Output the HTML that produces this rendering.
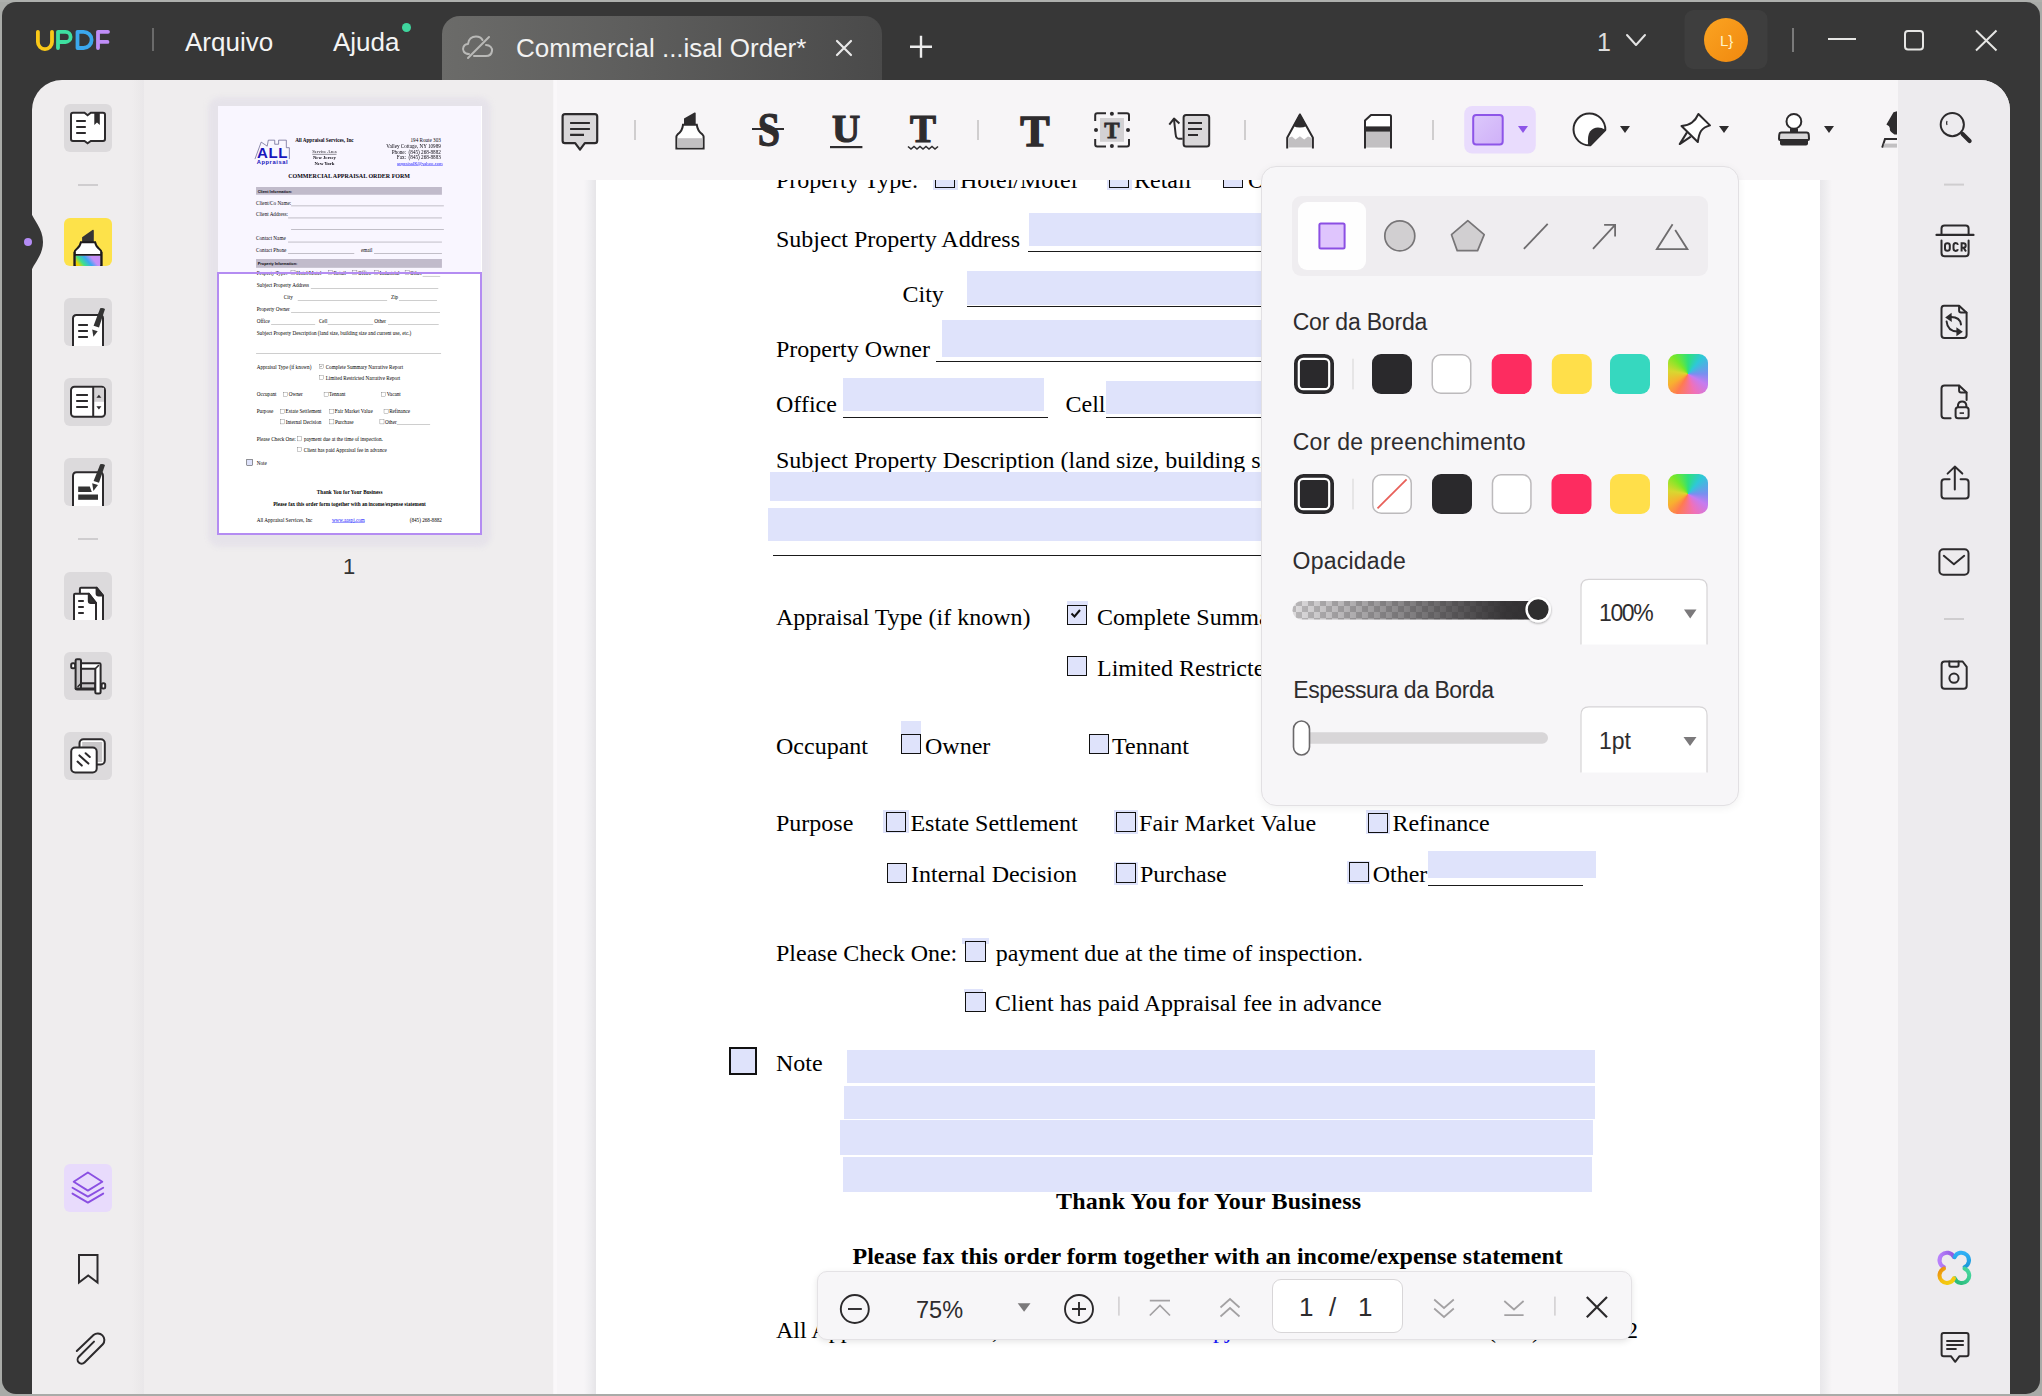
<!DOCTYPE html>
<html><head><meta charset="utf-8">
<style>
*{box-sizing:border-box;margin:0;padding:0}
html,body{width:2042px;height:1396px;overflow:hidden;background:#a9aba8;font-family:"Liberation Sans",sans-serif}
.abs{position:absolute}
#frame{position:absolute;left:2px;top:2px;width:2038px;height:1392px;background:#373737;border-radius:14px;overflow:hidden}
.t{position:absolute;white-space:pre;line-height:1}
.serif{font-family:"Liberation Serif",serif}
svg{position:absolute;overflow:visible}
.page{position:absolute;width:1224px;height:1992px;background:#fff;font-family:"Liberation Serif",serif;color:#000}
.pt{position:absolute;white-space:pre;line-height:1}
.pr{position:absolute}
.cb{background:#dfe3fb}
.thumb .fld{display:none}
.thumb .cb{background:#fff}
.thumbonly{display:none}
.thumb .thumbonly{display:block}
</style></head><body>
<div id="frame"></div>
<!-- desktop bits -->
<div class="abs" style="left:0;top:0;width:2042px;height:2px;background:#aeb0ad"></div>

<!-- ============ TITLE BAR ============ -->
<div id="titlebar">
  <div class="abs" style="left:152px;top:28px;width:2px;height:23px;background:#6a6a6a"></div>
  <div class="t" style="left:185px;top:29px;font-size:26px;color:#f4f4f4">Arquivo</div>
  <div class="t" style="left:333px;top:29px;font-size:26px;color:#f4f4f4">Ajuda</div>
  <div class="abs" style="left:402px;top:23px;width:9px;height:9px;border-radius:50%;background:#3fd69e"></div>
  <!-- tab -->
  <div class="abs" style="left:442px;top:16px;width:440px;height:64px;border-radius:18px 18px 0 0;background:linear-gradient(90deg,#6b6b69 0%,#5d5d5c 45%,#4a4a4a 100%)"></div>
  <div class="t" style="left:516px;top:35px;font-size:26px;color:#f2f2f2">Commercial ...isal Order*</div>

  <svg style="left:0;top:0" width="2042" height="80">
    <g fill="none" stroke-linecap="round" stroke-linejoin="round" stroke-width="3.8">
      <path d="M37.9,31.8 V42 A7.05,7.05 0 0 0 52,42 V31.8" stroke="#f9c818"/>
      <path d="M58,48 V31.8 H65.5 A5.1,5.1 0 0 1 65.5,42 H58" stroke="#3ee0a0"/>
      <path d="M77.5,31.8 V48 H83.5 A8.1,8.1 0 0 0 83.5,31.8 Z" stroke="#3ba8ee"/>
      <path d="M98,48 V31.8 H108 M98,41.9 H107.5" stroke="#c08ef8"/>
    </g>
    <!-- tab cloud-off icon -->
    <g fill="none" stroke="#b9b9b7" stroke-width="2" stroke-linecap="round" stroke-linejoin="round">
      <path d="M469,54 C464,54 462,50 463.5,47 C464.5,44.5 467,44 468,44 C468.5,39 472,36.5 476,36.5 C479,36.5 481.5,38 482.5,40"/>
      <path d="M486,45 C490,45 492.5,48 492,51 C491.5,54.5 489,56 486,56 H474"/>
      <path d="M489,37 L468,58"/>
    </g>
    <g stroke="#e8e8e8" stroke-width="2.2" stroke-linecap="round">
      <path d="M837,41 L851,55 M851,41 L837,55"/>
    </g>
    <g stroke="#ececec" stroke-width="2.4">
      <path d="M910,46.8 H932 M921,35.8 V57.8"/>
    </g>
    <!-- page count -->
    <g fill="none" stroke="#e4e4e4" stroke-width="2" stroke-linecap="round" stroke-linejoin="round">
      <path d="M1627,35 L1636,45 L1645,35"/>
    </g>
    <rect x="1684.5" y="10" width="83" height="59" rx="9" fill="#3e3e3e"/>
    <defs><linearGradient id="avg" x1="0" y1="0" x2="1" y2="1"><stop offset="0" stop-color="#fba422"/><stop offset="1" stop-color="#f0880e"/></linearGradient></defs><circle cx="1726" cy="40" r="22" fill="url(#avg)"/>
    <rect x="1792" y="28" width="2" height="24" fill="#7a7a7a"/>
    <g stroke="#e6e6e4" stroke-width="2" fill="none">
      <path d="M1828,39 H1856"/>
      <rect x="1905" y="31" width="18" height="18.6" rx="3"/>
      <path d="M1976,30.5 L1996.5,50.5 M1996.5,30.5 L1976,50.5"/>
    </g>
  </svg>
  <div class="t" style="left:1597px;top:30px;font-size:25px;color:#dedede">1</div>
  <div class="t" style="left:1720px;top:33px;font-size:15px;color:#fff3c8">L}</div>
</div>

<!-- ============ CONTENT PANEL ============ -->
<div class="abs" style="left:32px;top:80px;width:1978px;height:1314px;background:#efedee;border-radius:30px 30px 0 0;overflow:hidden">
  <!-- toolbar & doc area -->
  <div class="abs" style="left:521px;top:0;width:1345px;height:1314px;background:#f7f5f7"></div>
  <div class="abs" style="left:522px;top:0;width:3px;height:1314px;background:#faf8fa"></div>
  <!-- right sidebar -->
  <div class="abs" style="left:1866px;top:0;width:112px;height:1314px;background:#edebee"></div>
  <!-- sidebar divider -->
  <div class="abs" style="left:100px;top:0;width:12px;height:1314px;background:linear-gradient(90deg,rgba(233,231,233,0) 0%,#eceaeb 50%,#e9e7e9 100%)"></div>
</div>


<!-- ============ LEFT SIDEBAR ============ -->
<svg style="left:0;top:0" width="150" height="1396">
  <path d="M31,212 C33,220 43,228 43,242 C43,256 33,264 31,272 Z" fill="#373737"/>
  <circle cx="28" cy="242" r="4" fill="#b48cf5"/>
  <rect x="78" y="184" width="20" height="2" fill="#cfcdcf"/>
  <rect x="78" y="538" width="20" height="2" fill="#cfcdcf"/>
</svg>
<!-- book -->
<svg style="left:64px;top:104px" width="48" height="48" viewBox="0 0 48 48">
  <rect width="48" height="48" rx="6" fill="#dcdadc"/>
  <path d="M9,8.8 H20.5 L23.6,11.2 L26.8,8.8 H39 Q41,8.8 41,10.8 V35 Q41,37 39,37 H26.8 L23.6,39.2 L20.5,37 H9 Q7,37 7,35 V10.8 Q7,8.8 9,8.8 Z" fill="#fff" stroke="#2c2a2c" stroke-width="2"/>
  <path d="M12.2,17 H21.8 M12.2,23 H21.8 M12.2,28.9 H21.8" stroke="#2c2a2c" stroke-width="2"/>
  <path d="M30.3,9 H35.8 V20.9 L33,18.6 L30.3,20.9 Z" fill="#2c2a2c"/>
</svg>
<!-- highlighter -->
<svg style="left:64px;top:218px" width="48" height="48" viewBox="0 0 48 48">
  <defs><linearGradient id="rb" x1="0" y1="1" x2="1" y2="0.6">
    <stop offset="0" stop-color="#ffb000"/><stop offset="0.18" stop-color="#e8d400"/><stop offset="0.38" stop-color="#3ee08c"/><stop offset="0.62" stop-color="#38a8f0"/><stop offset="0.85" stop-color="#c58ef8"/></linearGradient>
  <clipPath id="c48"><rect width="48" height="48" rx="6"/></clipPath></defs>
  <rect width="48" height="48" rx="6" fill="#fde24a"/>
  <g clip-path="url(#c48)">
  <path d="M18.1,19.2 L28.4,12 Q29.8,11.4 29.8,13 V24.2 H18.1 Z" fill="#353535"/>
  <path d="M16.9,24.2 H31.1 Q31.8,28.5 35.3,31 Q37.4,32.8 37.4,34 V48 H10.6 V34 Q10.6,32.8 12.7,31 Q16.2,28.5 16.9,24.2 Z" fill="#fff" stroke="#1d1b1d" stroke-width="2"/>
  <rect x="11.6" y="37.6" width="24.8" height="12" fill="url(#rb)"/>
  <path d="M11,36.8 H37" stroke="#1d1b1d" stroke-width="1.8"/>
  <path d="M10.6,34 V48 M37.4,34 V48" stroke="#1d1b1d" stroke-width="2"/>
  </g>
</svg>
<!-- form -->
<svg style="left:64px;top:298px" width="48" height="48" viewBox="0 0 48 48">
  <defs><clipPath id="c48b"><rect width="48" height="48" rx="6"/></clipPath></defs>
  <rect width="48" height="48" rx="6" fill="#dcdadc"/>
  <g clip-path="url(#c48b)">
  <path d="M9,50 V20.5 Q9,17 12.5,17 H35.5 Q39,17 39,20.5 V50" fill="#fff" stroke="#2c2a2c" stroke-width="2"/>
  <path d="M14.2,27.1 H23.9 M14.2,33 H23.9 M14.2,38.9 H23.9" stroke="#2c2a2c" stroke-width="2"/>
  <path d="M36.2,10.2 Q38.6,9.3 41,10.9 L35,29.6 L29.6,27.8 Z" fill="#333"/>
  <path d="M28.2,31.4 L33.7,33.3 L29.4,38.8 Z" fill="#333"/>
  </g>
</svg>
<!-- toc -->
<svg style="left:64px;top:378px" width="48" height="48" viewBox="0 0 48 48">
  <rect width="48" height="48" rx="6" fill="#dcdadc"/>
  <rect x="7" y="8.8" width="34" height="30" rx="3.5" fill="#fff" stroke="#2c2a2c" stroke-width="2"/>
  <rect x="30.2" y="9.8" width="9.8" height="14" fill="#d5d3d5"/>
  <path d="M29.2,9 V38.8" stroke="#2c2a2c" stroke-width="2"/>
  <path d="M12.2,17 H23.9 M12.2,23 H23.9 M12.2,28.9 H23.9" stroke="#2c2a2c" stroke-width="2"/>
  <path d="M32.4,19.8 L34.9,16.8 L37.4,19.8 Z M32.4,28.2 L34.9,31.4 L37.4,28.2 Z" fill="#2c2a2c"/>
</svg>
<!-- form fill -->
<svg style="left:64px;top:458px" width="48" height="48" viewBox="0 0 48 48">
  <defs><clipPath id="c48c"><rect width="48" height="48" rx="6"/></clipPath></defs>
  <rect width="48" height="48" rx="6" fill="#dcdadc"/>
  <g clip-path="url(#c48c)">
  <path d="M9,50 V18 Q9,14.3 12.5,14.3 H35.5 Q39,14.3 39,18 V50" fill="#fff" stroke="#2c2a2c" stroke-width="2"/>
  <path d="M14.2,28.5 H25.8 L27.8,34 H14.2 Z" fill="#333"/>
  <rect x="14.2" y="36.5" width="19.8" height="5.3" fill="#333"/>
  <path d="M36.2,6.2 Q38.6,5.3 41,6.9 L35,24.8 L29.6,23 Z" fill="#333"/>
  <path d="M28.2,25.3 L34,27.1 L29.4,33.1 Z" fill="#333"/>
  </g>
</svg>
<!-- pages -->
<svg style="left:64px;top:572px" width="48" height="48" viewBox="0 0 48 48">
  <defs><clipPath id="c48d"><rect width="48" height="48" rx="6"/></clipPath></defs>
  <rect width="48" height="48" rx="6" fill="#dcdadc"/>
  <g clip-path="url(#c48d)">
  <path d="M15.9,50 V17 Q15.9,15.8 17,15.8 H32.6 L39,23.6 V50" fill="#fff" stroke="#2c2a2c" stroke-width="2"/>
  <path d="M32.6,15.8 V21.6 Q32.6,23.6 34.6,23.6 H39 Z" fill="#333" stroke="#2c2a2c" stroke-width="2" stroke-linejoin="round"/>
  <path d="M10,50 V23 Q10,21.8 11.2,21.8 H24.8 L32,31 V50" fill="#fff" stroke="#2c2a2c" stroke-width="2"/>
  <path d="M24.8,21.8 V29 Q24.8,31 26.8,31 H32 Z" fill="#333" stroke="#2c2a2c" stroke-width="2" stroke-linejoin="round"/>
  <path d="M14.2,28.9 H19.8 M14.2,35 H19.8 M14.2,40.9 H19.8" stroke="#2c2a2c" stroke-width="2"/>
  </g>
</svg>
<!-- crop -->
<svg style="left:64px;top:652px" width="48" height="48" viewBox="0 0 48 48">
  <rect width="48" height="48" rx="6" fill="#dcdadc"/>
  <g stroke="#2c2a2c" stroke-width="2" stroke-linejoin="round">
  <rect x="7.2" y="11.3" width="4" height="5" rx="1.5" fill="#fff"/>
  <rect x="37.6" y="31.3" width="3.6" height="5.2" rx="1.5" fill="#fff"/>
  <path d="M11.6,36.6 V8.5 Q11.6,7.2 13,7.2 H15.6 Q17,7.2 17,8.5 V36.6 Z" fill="#c8c6c8"/>
  <path d="M17,36.6 H31.3 V31.3 H17 Z" fill="#c8c6c8"/>
  <path d="M11.6,36.6 Q11.6,37.6 13,37.6 H31.3" fill="none"/>
  <path d="M17,11.3 H35.5 Q36.6,11.3 36.6,12.6 V40 Q36.6,41.5 35,41.5 H32.8 Q31.3,41.5 31.3,40 V16.8 H17 Z" fill="#fff"/>
  </g>
  <path d="M31.5,16.5 L34.5,13.5 M17.2,31.3 L14,34.5" stroke="#2c2a2c" stroke-width="1.6" stroke-linecap="round"/>
</svg>
<!-- overlay -->
<svg style="left:64px;top:732px" width="48" height="48" viewBox="0 0 48 48">
  <rect width="48" height="48" rx="6" fill="#dcdadc"/>
  <rect x="15.5" y="7.2" width="25.3" height="25.3" rx="4" fill="#fff" stroke="#2c2a2c" stroke-width="2"/>
  <rect x="18.2" y="10" width="20" height="20" fill="#c8c6c8"/>
  <rect x="7.2" y="15.5" width="25.5" height="25" rx="4" fill="#fff" stroke="#2c2a2c" stroke-width="2"/>
  <path d="M15.4,23.4 L24.4,31.6 M21.6,21.2 L25.8,25 M13.5,29.6 L17.8,33.6" stroke="#2c2a2c" stroke-width="2" stroke-linecap="round"/>
</svg>
<!-- layers -->
<svg style="left:64px;top:1164px" width="48" height="48" viewBox="0 0 48 48">
  <rect width="48" height="48" rx="6" fill="#e8dbfc"/>
  <g fill="none" stroke="#8a4fe2" stroke-width="1.9" stroke-linejoin="round" stroke-linecap="round">
  <path d="M23.9,8.5 L38.3,17.7 L23.9,26.6 L9.7,17.7 Z"/>
  <path d="M8.5,23.7 L23.9,32.6 L39.2,23.7"/>
  <path d="M8.5,29.6 L23.9,38.6 L39.2,29.6"/>
  </g>
</svg>
<!-- bookmark & clip -->
<svg style="left:0;top:1200px" width="150" height="196">
  <path d="M79,55 H97.5 V82.5 L88.2,75.5 L79,82.5 Z" fill="none" stroke="#2c2a2c" stroke-width="2"/>
  <path d="M76.8,151 L93.5,135 A6.6,6.6 0 0 1 102.8,144.3 L84.5,162.5 A4,4 0 0 1 78.8,156.8 L94,141.6" fill="none" stroke="#2c2a2c" stroke-width="2" stroke-linecap="round"/>
</svg>


<!-- ============ TOOLBAR ============ -->
<svg style="left:0;top:0" width="2042" height="200">
  <defs><clipPath id="tbclip"><rect x="553" y="80" width="1344" height="100"/></clipPath>
  <linearGradient id="sqg" x1="0" y1="0" x2="1" y2="1"><stop offset="0" stop-color="#dcc8fb"/><stop offset="1" stop-color="#cfb0f8"/></linearGradient></defs>
  <g clip-path="url(#tbclip)">
  <!-- comment -->
  <path d="M565,114.2 H594.8 Q597.2,114.2 597.2,116.6 V140.8 Q597.2,143.2 594.8,143.2 H584.8 L580,149.6 L575.2,143.2 H565 Q562.6,143.2 562.6,140.8 V116.6 Q562.6,114.2 565,114.2 Z" fill="#d9d7d9" stroke="#2c2a2c" stroke-width="2.2" stroke-linejoin="round"/>
  <path d="M570.1,123 H589.9 M570.1,129 H589.9 M570.1,134.9 H584" stroke="#2c2a2c" stroke-width="2.2"/>
  <g fill="#d0cecf"><rect x="634" y="120" width="2" height="20"/><rect x="977" y="120" width="2" height="20"/><rect x="1244" y="120" width="2" height="20"/><rect x="1432" y="120" width="2" height="20"/></g>
  <!-- highlighter -->
  <path d="M684,118.4 L694.5,112.6 Q695.7,112.2 695.7,113.5 V125 H684 Z" fill="#2e2c2e"/>
  <path d="M683,124.8 H696.8 Q697.6,131 702.4,134.4 Q703.6,135.4 703.6,136.6 V148.5 H676.4 V136.6 Q676.4,135.4 677.6,134.4 Q682.4,131 683,124.8 Z" fill="#fff" stroke="#2c2a2c" stroke-width="2"/>
  <rect x="677.4" y="138.2" width="25.2" height="9.5" fill="#c2c0c2"/>
  <!-- S strike -->
  <text x="769" y="145.6" text-anchor="middle" font-family="Liberation Serif" font-weight="bold" font-size="40" fill="#2e2c2e" stroke="#2e2c2e" stroke-width="1" transform="translate(0,-29) scale(1,1.2)">S</text>
  <rect x="752" y="128" width="32" height="2" fill="#2e2c2e"/>
  <!-- U -->
  <text x="846" y="142" text-anchor="middle" font-family="Liberation Serif" font-weight="bold" font-size="39" fill="#2e2c2e" stroke="#2e2c2e" stroke-width="1.2">U</text>
  <rect x="830" y="146" width="32.4" height="2.2" fill="#2e2c2e"/>
  <!-- T squiggle -->
  <text x="923" y="141.8" text-anchor="middle" font-family="Liberation Serif" font-weight="bold" font-size="39" fill="#2e2c2e" stroke="#2e2c2e" stroke-width="1.2">T</text>
  <path d="M908,146.5 L911,149 L914,146.5 L917,149 L920,146.5 L923,149 L926,146.5 L929,149 L932,146.5 L935,149 L938,146.5" fill="none" stroke="#2e2c2e" stroke-width="1.6"/>
  <!-- big T -->
  <text x="1035" y="145.8" text-anchor="middle" font-family="Liberation Serif" font-weight="bold" font-size="44" fill="#2e2c2e" stroke="#2e2c2e" stroke-width="1.4">T</text>
  <!-- text box -->
  <rect x="1100" y="118" width="24" height="23.8" fill="#d3d1d3"/>
  <path d="M1095.2,121 V115.2 Q1095.2,113.2 1097.2,113.2 H1106 M1117.6,113.2 H1127 Q1129,113.2 1129,115.2 V121 M1129,139 V144.6 Q1129,146.6 1127,146.6 H1117.6 M1106,146.6 H1097.2 Q1095.2,146.6 1095.2,144.6 V139" fill="none" stroke="#2c2a2c" stroke-width="2"/>
  <g fill="#2c2a2c"><circle cx="1111.9" cy="113.8" r="2"/><circle cx="1111.9" cy="146" r="2"/><circle cx="1096" cy="130" r="2"/><circle cx="1128" cy="130" r="2"/></g>
  <text x="1112" y="138" text-anchor="middle" font-family="Liberation Serif" font-weight="bold" font-size="23" fill="#2e2c2e" stroke="#2e2c2e" stroke-width="0.8">T</text>
  <!-- callout -->
  <rect x="1183.6" y="115" width="25.6" height="31.6" rx="2.5" fill="#d9d7d9" stroke="#2c2a2c" stroke-width="2"/>
  <path d="M1188,123 H1202 M1188,128.9 H1202 M1188,135 H1198" stroke="#2c2a2c" stroke-width="2"/>
  <path d="M1182.6,138.8 H1179 Q1176,138.8 1175.6,134 L1174,119.5" fill="none" stroke="#2c2a2c" stroke-width="2"/>
  <path d="M1169.3,124.6 L1174,118.6 L1179.4,123.5" fill="none" stroke="#2c2a2c" stroke-width="2" stroke-linejoin="round"/>
  <!-- pencil -->
  <path d="M1287.2,148.5 V137.8 L1299.9,114.5 L1312.9,137.8 V148.5" fill="#fff" stroke="#2c2a2c" stroke-width="2" stroke-linejoin="round"/>
  <path d="M1299.9,113.5 L1306.8,126 Q1299.9,129 1293,126 Z" fill="#2e2c2e"/>
  <path d="M1288.2,147.6 V138 L1292,136.5 L1295.5,139.5 L1299.9,136.2 L1304.2,139.5 L1308,136.5 L1311.9,138 V147.6 Z" fill="#c2c0c2"/>
  <!-- eraser -->
  <path d="M1365,148.5 V120.5 L1371,115 H1389.5 Q1391,115 1391,116.5 V148.5" fill="#fff" stroke="#2c2a2c" stroke-width="2" stroke-linejoin="round"/>
  <rect x="1365" y="126.4" width="26" height="5.4" fill="#2e2c2e"/>
  <rect x="1366" y="131.8" width="24" height="15.8" fill="#c2c0c2"/>
  <!-- selected rectangle -->
  <rect x="1464.2" y="105.9" width="71.6" height="47.7" rx="8" fill="#e9dcfd"/>
  <rect x="1473.2" y="115" width="29.5" height="29.5" rx="3" fill="url(#sqg)" stroke="#8d55e8" stroke-width="2"/>
  <path d="M1518,126 H1528 L1523,133 Z" fill="#8d55e8"/>
  <!-- sticker -->
  <path d="M1605.3,130 A15.9,15.9 0 1 0 1590.3,145.3 Z" fill="#fff" stroke="#2c2a2c" stroke-width="2" stroke-linejoin="round"/>
  <path d="M1605.8,130 Q1596,124.5 1590,131.5 Q1587,136 1588.2,145.6 L1590.6,145.8 Z" fill="#2e2c2e"/>
  <path d="M1620,126 H1630 L1625,133 Z M1719,126 H1729 L1724,133 Z M1824,126 H1834 L1829,133 Z" fill="#2e2c2e"/>
  <!-- pin -->
  <path d="M1698.4,114 L1710,125.4 Q1704,127 1701,131 Q1699,134 1697.8,142 L1681.5,126 Q1688,125.5 1692,122.5 Q1696,119.5 1698.4,114 Z" fill="#fff" stroke="#2c2a2c" stroke-width="2" stroke-linejoin="round"/>
  <path d="M1687,132.4 L1679.7,144.1 L1690.8,136.6" fill="none" stroke="#2c2a2c" stroke-width="2" stroke-linejoin="round"/>
  <!-- stamp -->
  <circle cx="1793.9" cy="121.4" r="7.4" fill="#fff" stroke="#2c2a2c" stroke-width="2"/>
  <path d="M1790,128.5 H1798 V133 H1790 Z" fill="#2e2c2e"/>
  <path d="M1781.5,132.6 H1806.5 Q1808.6,132.6 1808.8,135 L1809,139 Q1809,140 1808,140 H1780 Q1779,140 1779,139 L1779.2,135 Q1779.4,132.6 1781.5,132.6 Z" fill="#d9d7d9" stroke="#2c2a2c" stroke-width="2"/>
  <path d="M1780,140 H1808 V143.5 Q1808,145.6 1806,145.6 H1782 Q1780,145.6 1780,143.5 Z" fill="#2e2c2e"/>
  <!-- signature (clipped) -->
  <path d="M1893.5,112.2 L1898,111 V134.5 H1894.5 Q1889.5,131.5 1889.8,129 Q1890.6,126.8 1886.4,124.6 Z" fill="#2e2c2e"/>
  <path d="M1882.2,147.6 L1885,139 H1898" fill="none" stroke="#2e2c2e" stroke-width="2"/>
  <rect x="1883.8" y="143.6" width="14.2" height="4" fill="#c2c0c2"/>
  </g>
  <!-- search in right sidebar -->
  <circle cx="1952.3" cy="124.6" r="11.6" fill="none" stroke="#2c2a2c" stroke-width="2"/>
  <path d="M1947,121 Q1946.2,123 1947,125" fill="none" stroke="#2c2a2c" stroke-width="1.2"/>
  <path d="M1962.6,134 L1969.6,141" stroke="#2c2a2c" stroke-width="4.2" stroke-linecap="round"/>
</svg>

<!-- ============ DOCUMENT ============ -->
<div class="abs" style="left:553px;top:180px;width:1345px;height:1214px;overflow:hidden">
  <div class="abs" style="left:31px;top:0;width:12px;height:1214px;background:linear-gradient(90deg,rgba(230,228,232,0) 0%,#eeedf0 55%,#e6e5e8 100%)"></div>
  <div class="abs" style="left:1267px;top:0;width:12px;height:1214px;background:linear-gradient(90deg,#e8e7ea 0%,#efeef0 50%,rgba(247,245,247,0) 100%)"></div>
  <div class="page" style="left:43px;top:-773px">
<svg class="pr" style="left:0;top:0" width="400" height="300">
<path d="M172,242 L201,163 L229,182 L234,154 L264,154 L264,173 L282,173 L282,154 L318,154 L318,189 L332,189 L332,242" fill="none" stroke="#50507a" stroke-width="3"/>
<text x="181" y="237" font-family="Liberation Sans" font-weight="bold" font-size="70" fill="#1010b8" letter-spacing="3">ALL</text>
<text x="180" y="266" font-family="Liberation Sans" font-weight="bold" font-size="27" fill="#1010b8" letter-spacing="2.6">Appraisal</text>
</svg>
<div class="pt" style="left:359.0px;top:144.9px;font-size:24px;font-weight:bold;">All Appraisal Services, Inc</div>
<div class="pt" style="left:-5.0px;width:1000px;text-align:center;top:198.6px;font-size:22px;text-decoration:underline;">Service Area</div>
<div class="pt" style="left:-5.0px;width:1000px;text-align:center;top:225.6px;font-size:22px;font-weight:bold;">New Jersey</div>
<div class="pt" style="left:-5.0px;width:1000px;text-align:center;top:252.6px;font-size:22px;font-weight:bold;">New York</div>
<div class="pt" style="right:187.0px;top:144.9px;font-size:24px;">194 Route 303</div>
<div class="pt" style="right:187.0px;top:171.9px;font-size:24px;">Valley Cottage, NY 10989</div>
<div class="pt" style="right:187.0px;top:197.9px;font-size:24px;">Phone:&nbsp; (845) 268-8882</div>
<div class="pt" style="right:187.0px;top:223.9px;font-size:24px;">Fax:&nbsp; (845) 268-8883</div>
<div class="pt" style="right:178.0px;top:252.6px;font-size:22px;color:#1a1aff;text-decoration:underline;">appraisalK@yahoo.com</div>
<div class="pt" style="left:110.0px;width:1000px;text-align:center;top:308.6px;font-size:28px;font-weight:bold;">COMMERCIAL APPRAISAL ORDER FORM</div>
<div class="pr" style="left:177.0px;top:372.0px;width:865.0px;height:36.0px;background:#c4c1c8"></div>
<div class="pt" style="left:185.0px;top:384.9px;font-size:18px;font-weight:bold;font-family:'Liberation Sans';">Client Information:</div>
<div class="pt" style="left:177.0px;top:434.9px;font-size:24px;">Client/Co Name:</div>
<div class="pr" style="left:340.0px;top:459.0px;width:711.0px;height:2.0px;background:#777"></div>
<div class="pt" style="left:177.0px;top:489.9px;font-size:24px;">Client Address:</div>
<div class="pr" style="left:326.0px;top:515.0px;width:716.0px;height:2.0px;background:#777"></div>
<div class="pr" style="left:340.0px;top:569.0px;width:711.0px;height:2.0px;background:#777"></div>
<div class="pt" style="left:177.0px;top:599.9px;font-size:24px;">Contact Name</div>
<div class="pr" style="left:326.0px;top:627.0px;width:716.0px;height:2.0px;background:#777"></div>
<div class="pt" style="left:177.0px;top:655.9px;font-size:24px;">Contact Phone</div>
<div class="pr" style="left:326.0px;top:681.0px;width:308.0px;height:2.0px;background:#777"></div>
<div class="pt" style="left:665.0px;top:655.9px;font-size:24px;">email</div>
<div class="pr" style="left:726.0px;top:681.0px;width:316.0px;height:2.0px;background:#777"></div>
<div class="pr" style="left:177.0px;top:707.0px;width:865.0px;height:41.0px;background:#c4c1c8"></div>
<div class="pt" style="left:185.0px;top:721.9px;font-size:18px;font-weight:bold;font-family:'Liberation Sans';">Property Information:</div>
<div class="pt" style="left:180.0px;top:760.9px;font-size:24px;">Property Type:</div>
<div class="pr fld" style="left:337.0px;top:761.0px;width:25.0px;height:22.0px;background:#dfe3fb"></div>
<div class="pr cb" style="left:339.0px;top:760.5px;width:20.4px;height:20.4px;border:1.8px solid #111"></div>
<div class="pt" style="left:364.0px;top:760.9px;font-size:24px;">Hotel/Motel</div>
<div class="pr fld" style="left:511.0px;top:761.0px;width:25.0px;height:22.0px;background:#dfe3fb"></div>
<div class="pr cb" style="left:513.0px;top:760.5px;width:20.4px;height:20.4px;border:1.8px solid #111"></div>
<div class="pt" style="left:538.0px;top:760.9px;font-size:24px;">Retail</div>
<div class="pr cb" style="left:627.0px;top:760.5px;width:20.4px;height:20.4px;border:1.8px solid #111"></div>
<div class="pt" style="left:652.0px;top:760.9px;font-size:24px;">Office</div>
<div class="pr cb" style="left:727.0px;top:760.5px;width:20.4px;height:20.4px;border:1.8px solid #111"></div>
<div class="pt" style="left:752.0px;top:760.9px;font-size:24px;">Industrial</div>
<div class="pr cb" style="left:870.0px;top:760.5px;width:20.4px;height:20.4px;border:1.8px solid #111"></div>
<div class="pt" style="left:894.0px;top:760.9px;font-size:24px;">Other</div>
<div class="pr " style="left:952.0px;top:786.0px;width:82.0px;height:1.3px;background:#1a1a1a"></div>
<div class="pt" style="left:180.0px;top:819.9px;font-size:24px;">Subject Property Address</div>
<div class="pr fld" style="left:432.5px;top:805.5px;width:592.5px;height:33.5px;background:#dfe3fb"></div>
<div class="pr " style="left:431.5px;top:844.0px;width:593.5px;height:1.3px;background:#1a1a1a"></div>
<div class="pt" style="left:306.5px;top:875.4px;font-size:24px;">City</div>
<div class="pr fld" style="left:371.0px;top:864.0px;width:416.0px;height:34.0px;background:#dfe3fb"></div>
<div class="pr " style="left:371.0px;top:899.0px;width:416.0px;height:1.3px;background:#1a1a1a"></div>
<div class="pt" style="left:805.0px;top:875.4px;font-size:24px;">Zip</div>
<div class="pr fld" style="left:842.0px;top:864.0px;width:177.0px;height:34.0px;background:#dfe3fb"></div>
<div class="pr " style="left:842.0px;top:899.0px;width:177.0px;height:1.3px;background:#1a1a1a"></div>
<div class="pt" style="left:180.0px;top:930.4px;font-size:24px;">Property Owner</div>
<div class="pr fld" style="left:346.0px;top:913.0px;width:687.0px;height:37.0px;background:#dfe3fb"></div>
<div class="pr " style="left:340.0px;top:954.0px;width:693.0px;height:1.3px;background:#1a1a1a"></div>
<div class="pt" style="left:180.0px;top:985.4px;font-size:24px;">Office</div>
<div class="pr fld" style="left:247.0px;top:970.5px;width:201.0px;height:33.5px;background:#dfe3fb"></div>
<div class="pr " style="left:247.0px;top:1010.0px;width:204.5px;height:1.3px;background:#1a1a1a"></div>
<div class="pt" style="left:469.5px;top:985.4px;font-size:24px;">Cell</div>
<div class="pr fld" style="left:510.0px;top:974.0px;width:212.0px;height:33.0px;background:#dfe3fb"></div>
<div class="pr " style="left:510.0px;top:1010.0px;width:212.0px;height:1.3px;background:#1a1a1a"></div>
<div class="pt" style="left:727.0px;top:985.4px;font-size:24px;">Other</div>
<div class="pr fld" style="left:791.0px;top:974.0px;width:236.0px;height:33.0px;background:#dfe3fb"></div>
<div class="pr " style="left:791.0px;top:1010.0px;width:236.0px;height:1.3px;background:#1a1a1a"></div>
<div class="pt" style="left:180.0px;top:1040.9px;font-size:24px;">Subject Property Description (land size, building size and current use, etc.)</div>
<div class="pr fld" style="left:174.0px;top:1065.0px;width:864.0px;height:28.8px;background:#dfe3fb"></div>
<div class="pr fld" style="left:172.0px;top:1101.2px;width:866.0px;height:33.3px;background:#dfe3fb"></div>
<div class="pr " style="left:177.0px;top:1148.0px;width:861.0px;height:1.3px;background:#1a1a1a"></div>
<div class="pt" style="left:180.0px;top:1197.9px;font-size:24px;">Appraisal Type (if known)</div>
<div class="pr fld" style="left:471.0px;top:1194.0px;width:21.0px;height:5.0px;background:#dfe3fb"></div>
<div class="pr cb" style="left:471.0px;top:1198.0px;width:20.4px;height:20.4px;border:1.8px solid #111"><svg class="ck" width="20" height="20" style="position:absolute;left:-1.6px;top:-1.6px"><path d="M5.5,9.5 L8.5,12.5 L14,6" fill="none" stroke="#111" stroke-width="2"/></svg></div>
<div class="pt" style="left:501.0px;top:1197.9px;font-size:24px;">Complete Summary Narrative Report</div>
<div class="pr cb" style="left:471.0px;top:1249.0px;width:20.4px;height:20.4px;border:1.8px solid #111"></div>
<div class="pt" style="left:501.0px;top:1248.9px;font-size:24px;">Limited Restricted Narrative Report</div>
<div class="pt" style="left:180.0px;top:1326.9px;font-size:24px;">Occupant</div>
<div class="pr fld" style="left:305.0px;top:1314.0px;width:20.0px;height:15.0px;background:#dfe3fb"></div>
<div class="pr cb" style="left:305.0px;top:1327.0px;width:20.4px;height:20.4px;border:1.8px solid #111"></div>
<div class="pt" style="left:329.0px;top:1326.9px;font-size:24px;">Owner</div>
<div class="pr cb" style="left:492.5px;top:1327.0px;width:20.4px;height:20.4px;border:1.8px solid #111"></div>
<div class="pt" style="left:516.0px;top:1326.9px;font-size:24px;">Tennant</div>
<div class="pr cb" style="left:761.0px;top:1327.0px;width:20.4px;height:20.4px;border:1.8px solid #111"></div>
<div class="pt" style="left:785.0px;top:1326.9px;font-size:24px;">Vacant</div>
<div class="pt" style="left:180.0px;top:1404.4px;font-size:24px;">Purpose</div>
<div class="pr fld" style="left:287.0px;top:1403.0px;width:26.0px;height:23.0px;background:#dfe3fb"></div>
<div class="pr cb" style="left:290.0px;top:1405.0px;width:20.4px;height:20.4px;border:1.8px solid #111"></div>
<div class="pt" style="left:314.4px;top:1404.4px;font-size:24px;">Estate Settlement</div>
<div class="pr fld" style="left:518.0px;top:1403.0px;width:24.0px;height:24.0px;background:#dfe3fb"></div>
<div class="pr cb" style="left:519.6px;top:1405.0px;width:20.4px;height:20.4px;border:1.8px solid #111"></div>
<div class="pt" style="left:543.0px;top:1404.4px;font-size:24px;letter-spacing:0.18px;">Fair Market Value</div>
<div class="pr fld" style="left:770.0px;top:1403.0px;width:24.0px;height:24.0px;background:#dfe3fb"></div>
<div class="pr cb" style="left:772.0px;top:1405.5px;width:20.4px;height:20.4px;border:1.8px solid #111"></div>
<div class="pt" style="left:796.4px;top:1404.4px;font-size:24px;">Refinance</div>
<div class="pr cb" style="left:291.0px;top:1455.5px;width:20.4px;height:20.4px;border:1.8px solid #111"></div>
<div class="pt" style="left:315.0px;top:1454.9px;font-size:24px;">Internal Decision</div>
<div class="pr fld" style="left:518.0px;top:1455.0px;width:24.0px;height:23.0px;background:#dfe3fb"></div>
<div class="pr cb" style="left:519.6px;top:1455.5px;width:20.4px;height:20.4px;border:1.8px solid #111"></div>
<div class="pt" style="left:544.0px;top:1454.9px;font-size:24px;">Purchase</div>
<div class="pr fld" style="left:751.0px;top:1454.0px;width:23.0px;height:23.0px;background:#dfe3fb"></div>
<div class="pr cb" style="left:753.0px;top:1455.0px;width:20.4px;height:20.4px;border:1.8px solid #111"></div>
<div class="pt" style="left:776.7px;top:1454.6px;font-size:24px;">Other</div>
<div class="pr fld" style="left:832.0px;top:1443.5px;width:168.0px;height:27.9px;background:#dfe3fb"></div>
<div class="pr " style="left:832.0px;top:1478.0px;width:155.0px;height:1.3px;background:#1a1a1a"></div>
<div class="pt" style="left:180.0px;top:1533.7px;font-size:24px;">Please Check One:</div>
<div class="pr fld" style="left:366.0px;top:1531.0px;width:27.0px;height:6.0px;background:#dfe3fb"></div>
<div class="pr cb" style="left:369.3px;top:1534.3px;width:20.4px;height:20.4px;border:1.8px solid #111"></div>
<div class="pt" style="left:399.7px;top:1533.7px;font-size:24px;">payment due at the time of inspection.</div>
<div class="pr fld" style="left:368.0px;top:1582.0px;width:19.0px;height:4.0px;background:#dfe3fb"></div>
<div class="pr cb" style="left:369.3px;top:1584.5px;width:20.4px;height:20.4px;border:1.8px solid #111"></div>
<div class="pt" style="left:399.0px;top:1583.9px;font-size:24px;">Client has paid Appraisal fee in advance</div>
<div class="pr cb" style="left:133.0px;top:1640.4px;width:28px;height:28px;border:2.4px solid #111;background:#dfe3fb"></div>
<div class="pt" style="left:180.0px;top:1644.3px;font-size:24px;">Note</div>
<div class="pr fld" style="left:250.7px;top:1642.7px;width:748.0px;height:33.3px;background:#dfe3fb"></div>
<div class="pr fld" style="left:248.3px;top:1679.4px;width:750.4px;height:32.9px;background:#dfe3fb"></div>
<div class="pr fld" style="left:244.0px;top:1713.3px;width:753.3px;height:35.2px;background:#dfe3fb"></div>
<div class="pr fld" style="left:246.5px;top:1750.0px;width:749.8px;height:35.2px;background:#dfe3fb"></div>
<div class="pt" style="left:212.7px;width:800px;text-align:center;top:1781.6px;font-size:24px;font-weight:bold;letter-spacing:0.25px;">Thank You for Your Business</div>
<div class="pt" style="left:211.7px;width:800px;text-align:center;top:1836.9px;font-size:24px;font-weight:bold;">Please fax this order form together with an income/expense statement</div>
<div class="pt" style="left:180.0px;top:1910.9px;font-size:24px;">All Appraisal Services, Inc</div>
<div class="pt" style="left:530.0px;top:1910.9px;font-size:24px;color:#1a1aff;">www.aaspj.com</div>
<div class="pr thumbonly" style="left:530px;top:1933px;width:153px;height:2px;background:#1a1aff"></div>
<div class="pt" style="right:182.0px;top:1910.9px;font-size:24px;">(845) 268-8882</div>
  </div>
</div>


<!-- ============ POPUP ============ -->
<div class="abs" style="left:1261px;top:165.5px;width:478px;height:640px;border-radius:15px;background:#f7f6f8;border:1px solid #e2e0e3;box-shadow:0 2px 8px rgba(0,0,0,0.06)"></div>
<div class="abs" style="left:1292.3px;top:196px;width:416px;height:80px;border-radius:9px;background:#efedf0"></div>
<div class="abs" style="left:1298px;top:202px;width:68px;height:68px;border-radius:9px;background:#fefefe"></div>
<svg style="left:0;top:0" width="2042" height="820">
  <rect x="1319.4" y="223.4" width="25.2" height="25.2" rx="1.5" fill="#dfc5fd" stroke="#8b4fe3" stroke-width="2"/>
  <circle cx="1399.8" cy="235.9" r="15" fill="#d1cfd1" stroke="#777577" stroke-width="1.7"/>
  <path d="M1467.8,220.6 L1484.2,234.7 L1477.6,250.6 H1457.2 L1451.5,234.7 Z" fill="#d1cfd1" stroke="#777577" stroke-width="1.7" stroke-linejoin="round"/>
  <path d="M1523.9,248.8 L1547.7,223.9" stroke="#6e6c6e" stroke-width="1.8"/>
  <path d="M1593,248.8 L1615.1,224.9 M1604.1,224.9 H1615.1 V236.6" fill="none" stroke="#6e6c6e" stroke-width="1.8"/>
  <path d="M1672.6,224.2 L1656.8,249.2 H1687.4 L1675.2,230" fill="none" stroke="#6e6c6e" stroke-width="1.8"/>
  <defs>
    <clipPath id="sw"><rect x="0" y="0" width="40" height="40" rx="9"/></clipPath>
    <pattern id="chk" width="12" height="12" patternUnits="userSpaceOnUse"><rect width="12" height="12" fill="#dedcde"/><rect width="6" height="6" fill="#b9b7b9"/><rect x="6" y="6" width="6" height="6" fill="#b9b7b9"/></pattern>
    <linearGradient id="opg" x1="0" x2="1"><stop offset="0" stop-color="#2f2d2f" stop-opacity="0"/><stop offset="0.85" stop-color="#2f2d2f" stop-opacity="0.95"/><stop offset="1" stop-color="#2f2d2f"/></linearGradient>
    <filter id="ksh" x="-50%" y="-50%" width="200%" height="200%"><feDropShadow dx="0" dy="1" stdDeviation="1.2" flood-opacity="0.35"/></filter>
  </defs>
  <rect x="1295.6" y="355.6" width="36.8" height="36.8" rx="8" fill="#2a292c" stroke="#2a292c" stroke-width="3.2"/>
  <rect x="1298.8" y="358.8" width="30.4" height="30.4" rx="4.5" fill="#2a292c" stroke="#fff" stroke-width="2.2"/>
  <rect x="1352.2" y="358.7" width="1.6" height="30.7" fill="#e2e0e2"/>
  <rect x="1372" y="354" width="40" height="40" rx="9" fill="#2a292c"/>
  <rect x="1432.25" y="354.75" width="38.5" height="38.5" rx="8.5" fill="#ffffff" stroke="#bcbabc" stroke-width="1.5"/>
  <rect x="1491.7" y="354" width="40" height="40" rx="9" fill="#fd2c60"/>
  <rect x="1551.8" y="354" width="40" height="40" rx="9" fill="#ffdf4a"/>
  <rect x="1610" y="354" width="40" height="40" rx="9" fill="#36d8bf"/>
  <foreignObject x="1668" y="354" width="40" height="40"><div style="width:40px;height:40px;border-radius:9px;background:conic-gradient(from 0deg at 50% 50%,#2ee07a 0deg,#2ec8d8 40deg,#7a8ef0 90deg,#c57cf0 120deg,#f070b8 160deg,#ff7a50 210deg,#f8b030 240deg,#d8d830 280deg,#78e828 320deg,#2ee07a 360deg)"></div></foreignObject>
  <rect x="1295.6" y="475.6" width="36.8" height="36.8" rx="8" fill="#2a292c" stroke="#2a292c" stroke-width="3.2"/>
  <rect x="1298.8" y="478.8" width="30.4" height="30.4" rx="4.5" fill="#2a292c" stroke="#fff" stroke-width="2.2"/>
  <rect x="1352.2" y="478.7" width="1.6" height="30.7" fill="#e2e0e2"/>
  <rect x="1372.75" y="474.75" width="38.5" height="38.5" rx="8.5" fill="#ffffff" stroke="#bcbabc" stroke-width="1.5"/>
  <path d="M1377.5,508.4 L1406.6,479.3" stroke="#e8605a" stroke-width="1.8"/>
  <rect x="1432" y="474" width="40" height="40" rx="9" fill="#2a292c"/>
  <rect x="1492.45" y="474.75" width="38.5" height="38.5" rx="8.5" fill="#ffffff" stroke="#bcbabc" stroke-width="1.5"/>
  <rect x="1551.5" y="474" width="40" height="40" rx="9" fill="#fd2c60"/>
  <rect x="1610" y="474" width="40" height="40" rx="9" fill="#ffdf4a"/>
  <foreignObject x="1668" y="474" width="40" height="40"><div style="width:40px;height:40px;border-radius:9px;background:conic-gradient(from 0deg at 50% 50%,#2ee07a 0deg,#2ec8d8 40deg,#7a8ef0 90deg,#c57cf0 120deg,#f070b8 160deg,#ff7a50 210deg,#f8b030 240deg,#d8d830 280deg,#78e828 320deg,#2ee07a 360deg)"></div></foreignObject>
  <rect x="1292.5" y="601" width="250" height="18.6" rx="9.3" fill="url(#chk)"/>
  <rect x="1292.5" y="601" width="250" height="18.6" rx="9.3" fill="url(#opg)"/>
  <circle cx="1538.2" cy="609.6" r="11.6" fill="#2f2d2f" stroke="#fff" stroke-width="2.4" filter="url(#ksh)"/>
  <rect x="1293" y="732.2" width="255" height="11.5" rx="5.75" fill="#d8d6d8"/>
  <rect x="1293.5" y="721" width="16" height="34" rx="8" fill="#fff" stroke="#6b696b" stroke-width="1.6"/>
  <path d="M1581,644.5 V587.3 Q1581,579.3 1589,579.3 H1699 Q1707,579.3 1707,587.3 V644.5 Z" fill="#fff"/>
  <path d="M1581,644.5 V587.3 Q1581,579.3 1589,579.3 H1699 Q1707,579.3 1707,587.3 V644.5" fill="none" stroke="#d6d4d6" stroke-width="1.2"/>
  <path d="M1581,772.5 V714.9 Q1581,706.9 1589,706.9 H1699 Q1707,706.9 1707,714.9 V772.5 Z" fill="#fff"/>
  <path d="M1581,772.5 V714.9 Q1581,706.9 1589,706.9 H1699 Q1707,706.9 1707,714.9 V772.5" fill="none" stroke="#d6d4d6" stroke-width="1.2"/>
  <path d="M1684,609.5 H1696.5 L1690.2,618.5 Z M1683.5,737 H1696.5 L1690,746 Z" fill="#7b797b"/>
</svg>
<div class="t" style="left:1292.7px;top:310.5px;font-size:23px;color:#2e2c2e;letter-spacing:-0.2px;">Cor da Borda</div>
<div class="t" style="left:1292.7px;top:430.5px;font-size:23px;color:#2e2c2e;letter-spacing:0.28px;">Cor de preenchimento</div>
<div class="t" style="left:1292.5px;top:550.2px;font-size:23px;color:#2e2c2e;letter-spacing:0.25px;">Opacidade</div>
<div class="t" style="left:1293.3px;top:678.9px;font-size:23px;color:#2e2c2e;letter-spacing:-0.45px;">Espessura da Borda</div>
<div class="t" style="left:1599px;top:602.4px;font-size:23px;color:#2e2c2e;letter-spacing:-1.4px;">100%</div>
<div class="t" style="left:1599px;top:730.2px;font-size:23px;color:#2e2c2e;">1pt</div>


<!-- ============ RIGHT SIDEBAR ============ -->
<svg style="left:0;top:0" width="2042" height="1396">
  <g fill="#cfcdcf"><rect x="1944" y="183.6" width="20" height="2"/><rect x="1944" y="618" width="20" height="2"/></g>
  <g fill="none" stroke="#2c2a2c" stroke-width="2" stroke-linejoin="round" stroke-linecap="round">
    <!-- OCR -->
    <path d="M1941.5,234.5 V228.5 Q1941.5,225.5 1944.5,225.5 H1965.6 Q1968.6,225.5 1968.6,228.5 V234.5"/>
    <path d="M1936.5,234.9 H1973.5" stroke-width="2.2"/>
    <path d="M1941.5,240.5 V253 Q1941.5,256.2 1944.7,256.2 H1965.4 Q1968.6,256.2 1968.6,253 V240.5"/>
    <!-- convert -->
    <path d="M1944,305.8 H1959.1 L1966.6,312.8 V335 Q1966.6,338 1963.6,338 H1944.5 Q1941.5,338 1941.5,335 V308.8 Q1941.5,305.8 1944,305.8 Z"/>
    <path d="M1959.1,306 V310.5 Q1959.1,312.5 1961,312.5 H1966.4"/>
    <path d="M1961,324.5 Q1960,316.8 1950.5,317" />
    <path d="M1946.6,321.5 Q1947.5,331.2 1957.5,331.6" />
    <!-- protect -->
    <path d="M1950.6,418.2 H1944.5 Q1941.5,418.2 1941.5,415.2 V388.5 Q1941.5,385.5 1944.5,385.5 H1959.1 L1966.6,392.6 V400"/>
    <path d="M1959.1,385.7 V390.6 Q1959.1,392.6 1961,392.6 H1966.4"/>
    <rect x="1955.6" y="407.2" width="13" height="11" rx="2.5"/>
    <path d="M1958,407 V405 A4.2,4.2 0 0 1 1966.3,405 V407"/>
    <!-- share -->
    <path d="M1949.6,479.3 H1944.5 Q1941.5,479.3 1941.5,482.3 V495.4 Q1941.5,498.4 1944.5,498.4 H1965.6 Q1968.6,498.4 1968.6,495.4 V482.3 Q1968.6,479.3 1965.6,479.3 H1960.6"/>
    <path d="M1954.8,489.6 V467.3 M1947.6,473.6 L1954.8,466.6 L1962.3,473.6"/>
    <!-- mail -->
    <rect x="1939.4" y="549.3" width="29.1" height="25.4" rx="4"/>
    <path d="M1943.8,555.8 L1953.9,564.2 L1964.2,555.8"/>
    <!-- save -->
    <path d="M1944.6,661.5 H1962.6 L1966.7,666.8 V685.8 Q1966.7,688.8 1963.7,688.8 H1944.6 Q1941.6,688.8 1941.6,685.8 V664.5 Q1941.6,661.5 1944.6,661.5 Z"/>
    <path d="M1949.3,661.5 V665 Q1949.3,666.7 1951,666.7 H1957 Q1958.6,666.7 1958.6,665 V661.5"/>
    <circle cx="1954" cy="678.2" r="4.6"/>
    <!-- comment -->
    <path d="M1943.6,1333.1 H1966.5 Q1968.5,1333.1 1968.5,1335.1 V1354.2 Q1968.5,1356.2 1966.5,1356.2 H1959.5 L1955.2,1361.8 L1950.9,1356.2 H1943.6 Q1941.6,1356.2 1941.6,1354.2 V1335.1 Q1941.6,1333.1 1943.6,1333.1 Z"/>
  </g>
  <path d="M1946.3,1341 H1963.8 M1946.3,1345 H1963.8 M1946.3,1349 H1956.6" stroke="#2c2a2c" stroke-width="1.8"/>
  <path d="M1945.2,317.4 L1951.6,312.8 L1951.8,322 Z M1962.8,331.7 L1956.4,327.2 L1956.4,336.2 Z" fill="#2c2a2c"/>
  <g fill="none" stroke="#2c2a2c" stroke-width="2">
    <rect x="1945" y="243.2" width="4.8" height="7.6" rx="2.3"/>
    <path d="M1957.9,244.8 Q1957.6,243.1 1955.8,243.1 Q1953.5,243.1 1953.5,245.6 V248.6 Q1953.5,250.9 1955.8,250.9 Q1957.6,250.9 1957.9,249.3"/>
    <path d="M1961.6,251.6 V243.2 H1963.4 Q1965.7,243.2 1965.7,245.5 Q1965.7,247.7 1963.4,247.7 H1961.6 M1963.6,247.7 L1966,251.6"/>
  </g>
  <rect x="1959.6" y="412.3" width="4.4" height="1.6" fill="#2c2a2c"/>
  <!-- AI logo -->
  <defs>
    <linearGradient id="ai1" x1="0" y1="0" x2="1" y2="1"><stop offset="0" stop-color="#a86ef5"/><stop offset="1" stop-color="#8a5ce8"/></linearGradient>
  </defs>
  <defs>
    <linearGradient id="aiP" x1="0" y1="0" x2="1" y2="0"><stop offset="0" stop-color="#b880fb"/><stop offset="1" stop-color="#9058e0"/></linearGradient>
    <linearGradient id="aiB" x1="0" y1="0" x2="0" y2="1"><stop offset="0" stop-color="#30b0f5"/><stop offset="1" stop-color="#1a98d8"/></linearGradient>
    <linearGradient id="aiG" x1="1" y1="0" x2="0" y2="1"><stop offset="0" stop-color="#48d8a0"/><stop offset="1" stop-color="#28b878"/></linearGradient>
    <linearGradient id="aiY" x1="0" y1="0" x2="1" y2="1"><stop offset="0" stop-color="#e88a10"/><stop offset="0.5" stop-color="#f5c010"/><stop offset="1" stop-color="#f2d010"/></linearGradient>
  </defs>
  <g fill="none" stroke-width="4" stroke-linecap="round">
    <path d="M1943.9,1267 A7.5,7.5 0 1 1 1953.8,1257" stroke="url(#aiP)"/>
    <path d="M1954.6,1257.2 A7.5,7.5 0 1 1 1964.6,1267" stroke="url(#aiB)"/>
    <path d="M1964.6,1268.6 A7.5,7.5 0 1 1 1954.8,1278.4" stroke="url(#aiG)"/>
    <path d="M1953.9,1278.4 A7.5,7.5 0 1 1 1943.9,1268.6" stroke="url(#aiY)"/>
  </g>
</svg>

<!-- ============ ZOOM BAR ============ -->
<div class="abs" style="left:817.2px;top:1271.3px;width:814.5px;height:69px;border-radius:10px;background:#f7f6f8;border:1px solid #e4e2e5;box-shadow:0 2px 6px rgba(0,0,0,0.10)"></div>
<div class="abs" style="left:1271.6px;top:1279.4px;width:131.2px;height:53.2px;border-radius:9px;background:#fff;border:1.2px solid #d8d6d8"></div>
<svg style="left:0;top:1200px" width="2042" height="196">
  <g fill="none" stroke="#2c2a2c" stroke-width="1.9">
    <circle cx="854.8" cy="109" r="14"/><path d="M848,109 H861.8"/>
    <circle cx="1079" cy="109" r="14"/><path d="M1072,109 H1086 M1079,102 V116"/>
    <path d="M1586.8,97 L1607,117.2 M1607,97 L1586.8,117.2" stroke-width="2.2"/>
  </g>
  <path d="M1017.7,103.2 H1030.5 L1024.1,111.8 Z" fill="#7b797b"/>
  <g fill="#d6d4d6"><rect x="1118" y="96.6" width="1.8" height="19"/><rect x="1554" y="96.6" width="1.8" height="19"/></g>
  <g fill="none" stroke="#a3a1a3" stroke-width="1.7">
    <path d="M1149.8,100.7 H1170 M1149.8,115.5 L1160,105.5 L1170,115.5"/>
    <path d="M1220.5,107.5 L1230,99 L1239.5,107.5 M1220.5,116.5 L1230,108 L1239.5,116.5"/>
    <path d="M1434.2,99.5 L1444,108 L1453.8,99.5 M1434.2,108.5 L1444,117 L1453.8,108.5"/>
    <path d="M1504.3,101 L1514,109.5 L1523.6,101 M1504.3,115.2 H1523.6"/>
  </g>
</svg>
<div class="t" style="left:916px;top:1298.5px;font-size:23.5px;color:#2e2c2e">75%</div>
<div class="t" style="left:1299px;top:1294.4px;font-size:26px;color:#2e2c2e">1</div>
<div class="t" style="left:1329px;top:1294.4px;font-size:26px;color:#2e2c2e">/</div>
<div class="t" style="left:1358px;top:1294.4px;font-size:26px;color:#2e2c2e">1</div>

<!-- ============ THUMBNAIL ============ -->
<div class="abs" style="left:208px;top:97px;width:283px;height:450px;border-radius:12px;background:#e6e3ea;filter:blur(2.5px)"></div>
<div class="page thumb" style="left:218px;top:106px;transform:scale(0.2149);transform-origin:0 0">
<div style="position:absolute;left:0;top:4.6px;width:1224px;height:1987px">
<svg class="pr" style="left:0;top:0" width="400" height="300">
<path d="M172,242 L201,163 L229,182 L234,154 L264,154 L264,173 L282,173 L282,154 L318,154 L318,189 L332,189 L332,242" fill="none" stroke="#50507a" stroke-width="3"/>
<text x="181" y="237" font-family="Liberation Sans" font-weight="bold" font-size="70" fill="#1010b8" letter-spacing="3">ALL</text>
<text x="180" y="266" font-family="Liberation Sans" font-weight="bold" font-size="27" fill="#1010b8" letter-spacing="2.6">Appraisal</text>
</svg>
<div class="pt" style="left:359.0px;top:144.9px;font-size:24px;font-weight:bold;">All Appraisal Services, Inc</div>
<div class="pt" style="left:-5.0px;width:1000px;text-align:center;top:198.6px;font-size:22px;text-decoration:underline;">Service Area</div>
<div class="pt" style="left:-5.0px;width:1000px;text-align:center;top:225.6px;font-size:22px;font-weight:bold;">New Jersey</div>
<div class="pt" style="left:-5.0px;width:1000px;text-align:center;top:252.6px;font-size:22px;font-weight:bold;">New York</div>
<div class="pt" style="right:187.0px;top:144.9px;font-size:24px;">194 Route 303</div>
<div class="pt" style="right:187.0px;top:171.9px;font-size:24px;">Valley Cottage, NY 10989</div>
<div class="pt" style="right:187.0px;top:197.9px;font-size:24px;">Phone:&nbsp; (845) 268-8882</div>
<div class="pt" style="right:187.0px;top:223.9px;font-size:24px;">Fax:&nbsp; (845) 268-8883</div>
<div class="pt" style="right:178.0px;top:252.6px;font-size:22px;color:#1a1aff;text-decoration:underline;">appraisalK@yahoo.com</div>
<div class="pt" style="left:110.0px;width:1000px;text-align:center;top:308.6px;font-size:28px;font-weight:bold;">COMMERCIAL APPRAISAL ORDER FORM</div>
<div class="pr" style="left:177.0px;top:372.0px;width:865.0px;height:36.0px;background:#c4c1c8"></div>
<div class="pt" style="left:185.0px;top:384.9px;font-size:18px;font-weight:bold;font-family:'Liberation Sans';">Client Information:</div>
<div class="pt" style="left:177.0px;top:434.9px;font-size:24px;">Client/Co Name:</div>
<div class="pr" style="left:340.0px;top:459.0px;width:711.0px;height:2.0px;background:#777"></div>
<div class="pt" style="left:177.0px;top:489.9px;font-size:24px;">Client Address:</div>
<div class="pr" style="left:326.0px;top:515.0px;width:716.0px;height:2.0px;background:#777"></div>
<div class="pr" style="left:340.0px;top:569.0px;width:711.0px;height:2.0px;background:#777"></div>
<div class="pt" style="left:177.0px;top:599.9px;font-size:24px;">Contact Name</div>
<div class="pr" style="left:326.0px;top:627.0px;width:716.0px;height:2.0px;background:#777"></div>
<div class="pt" style="left:177.0px;top:655.9px;font-size:24px;">Contact Phone</div>
<div class="pr" style="left:326.0px;top:681.0px;width:308.0px;height:2.0px;background:#777"></div>
<div class="pt" style="left:665.0px;top:655.9px;font-size:24px;">email</div>
<div class="pr" style="left:726.0px;top:681.0px;width:316.0px;height:2.0px;background:#777"></div>
<div class="pr" style="left:177.0px;top:707.0px;width:865.0px;height:41.0px;background:#c4c1c8"></div>
<div class="pt" style="left:185.0px;top:721.9px;font-size:18px;font-weight:bold;font-family:'Liberation Sans';">Property Information:</div>
<div class="pt" style="left:180.0px;top:760.9px;font-size:24px;">Property Type:</div>
<div class="pr fld" style="left:337.0px;top:761.0px;width:25.0px;height:22.0px;background:#dfe3fb"></div>
<div class="pr cb" style="left:339.0px;top:760.5px;width:20.4px;height:20.4px;border:1.8px solid #111"></div>
<div class="pt" style="left:364.0px;top:760.9px;font-size:24px;">Hotel/Motel</div>
<div class="pr fld" style="left:511.0px;top:761.0px;width:25.0px;height:22.0px;background:#dfe3fb"></div>
<div class="pr cb" style="left:513.0px;top:760.5px;width:20.4px;height:20.4px;border:1.8px solid #111"></div>
<div class="pt" style="left:538.0px;top:760.9px;font-size:24px;">Retail</div>
<div class="pr cb" style="left:627.0px;top:760.5px;width:20.4px;height:20.4px;border:1.8px solid #111"></div>
<div class="pt" style="left:652.0px;top:760.9px;font-size:24px;">Office</div>
<div class="pr cb" style="left:727.0px;top:760.5px;width:20.4px;height:20.4px;border:1.8px solid #111"></div>
<div class="pt" style="left:752.0px;top:760.9px;font-size:24px;">Industrial</div>
<div class="pr cb" style="left:870.0px;top:760.5px;width:20.4px;height:20.4px;border:1.8px solid #111"></div>
<div class="pt" style="left:894.0px;top:760.9px;font-size:24px;">Other</div>
<div class="pr " style="left:952.0px;top:786.0px;width:82.0px;height:1.3px;background:#1a1a1a"></div>
<div class="pt" style="left:180.0px;top:819.9px;font-size:24px;">Subject Property Address</div>
<div class="pr fld" style="left:432.5px;top:805.5px;width:592.5px;height:33.5px;background:#dfe3fb"></div>
<div class="pr " style="left:431.5px;top:844.0px;width:593.5px;height:1.3px;background:#1a1a1a"></div>
<div class="pt" style="left:306.5px;top:875.4px;font-size:24px;">City</div>
<div class="pr fld" style="left:371.0px;top:864.0px;width:416.0px;height:34.0px;background:#dfe3fb"></div>
<div class="pr " style="left:371.0px;top:899.0px;width:416.0px;height:1.3px;background:#1a1a1a"></div>
<div class="pt" style="left:805.0px;top:875.4px;font-size:24px;">Zip</div>
<div class="pr fld" style="left:842.0px;top:864.0px;width:177.0px;height:34.0px;background:#dfe3fb"></div>
<div class="pr " style="left:842.0px;top:899.0px;width:177.0px;height:1.3px;background:#1a1a1a"></div>
<div class="pt" style="left:180.0px;top:930.4px;font-size:24px;">Property Owner</div>
<div class="pr fld" style="left:346.0px;top:913.0px;width:687.0px;height:37.0px;background:#dfe3fb"></div>
<div class="pr " style="left:340.0px;top:954.0px;width:693.0px;height:1.3px;background:#1a1a1a"></div>
<div class="pt" style="left:180.0px;top:985.4px;font-size:24px;">Office</div>
<div class="pr fld" style="left:247.0px;top:970.5px;width:201.0px;height:33.5px;background:#dfe3fb"></div>
<div class="pr " style="left:247.0px;top:1010.0px;width:204.5px;height:1.3px;background:#1a1a1a"></div>
<div class="pt" style="left:469.5px;top:985.4px;font-size:24px;">Cell</div>
<div class="pr fld" style="left:510.0px;top:974.0px;width:212.0px;height:33.0px;background:#dfe3fb"></div>
<div class="pr " style="left:510.0px;top:1010.0px;width:212.0px;height:1.3px;background:#1a1a1a"></div>
<div class="pt" style="left:727.0px;top:985.4px;font-size:24px;">Other</div>
<div class="pr fld" style="left:791.0px;top:974.0px;width:236.0px;height:33.0px;background:#dfe3fb"></div>
<div class="pr " style="left:791.0px;top:1010.0px;width:236.0px;height:1.3px;background:#1a1a1a"></div>
<div class="pt" style="left:180.0px;top:1040.9px;font-size:24px;">Subject Property Description (land size, building size and current use, etc.)</div>
<div class="pr fld" style="left:174.0px;top:1065.0px;width:864.0px;height:28.8px;background:#dfe3fb"></div>
<div class="pr fld" style="left:172.0px;top:1101.2px;width:866.0px;height:33.3px;background:#dfe3fb"></div>
<div class="pr " style="left:177.0px;top:1148.0px;width:861.0px;height:1.3px;background:#1a1a1a"></div>
<div class="pt" style="left:180.0px;top:1197.9px;font-size:24px;">Appraisal Type (if known)</div>
<div class="pr fld" style="left:471.0px;top:1194.0px;width:21.0px;height:5.0px;background:#dfe3fb"></div>
<div class="pr cb" style="left:471.0px;top:1198.0px;width:20.4px;height:20.4px;border:1.8px solid #111"><svg class="ck" width="20" height="20" style="position:absolute;left:-1.6px;top:-1.6px"><path d="M5.5,9.5 L8.5,12.5 L14,6" fill="none" stroke="#111" stroke-width="2"/></svg></div>
<div class="pt" style="left:501.0px;top:1197.9px;font-size:24px;">Complete Summary Narrative Report</div>
<div class="pr cb" style="left:471.0px;top:1249.0px;width:20.4px;height:20.4px;border:1.8px solid #111"></div>
<div class="pt" style="left:501.0px;top:1248.9px;font-size:24px;">Limited Restricted Narrative Report</div>
<div class="pt" style="left:180.0px;top:1326.9px;font-size:24px;">Occupant</div>
<div class="pr fld" style="left:305.0px;top:1314.0px;width:20.0px;height:15.0px;background:#dfe3fb"></div>
<div class="pr cb" style="left:305.0px;top:1327.0px;width:20.4px;height:20.4px;border:1.8px solid #111"></div>
<div class="pt" style="left:329.0px;top:1326.9px;font-size:24px;">Owner</div>
<div class="pr cb" style="left:492.5px;top:1327.0px;width:20.4px;height:20.4px;border:1.8px solid #111"></div>
<div class="pt" style="left:516.0px;top:1326.9px;font-size:24px;">Tennant</div>
<div class="pr cb" style="left:761.0px;top:1327.0px;width:20.4px;height:20.4px;border:1.8px solid #111"></div>
<div class="pt" style="left:785.0px;top:1326.9px;font-size:24px;">Vacant</div>
<div class="pt" style="left:180.0px;top:1404.4px;font-size:24px;">Purpose</div>
<div class="pr fld" style="left:287.0px;top:1403.0px;width:26.0px;height:23.0px;background:#dfe3fb"></div>
<div class="pr cb" style="left:290.0px;top:1405.0px;width:20.4px;height:20.4px;border:1.8px solid #111"></div>
<div class="pt" style="left:314.4px;top:1404.4px;font-size:24px;">Estate Settlement</div>
<div class="pr fld" style="left:518.0px;top:1403.0px;width:24.0px;height:24.0px;background:#dfe3fb"></div>
<div class="pr cb" style="left:519.6px;top:1405.0px;width:20.4px;height:20.4px;border:1.8px solid #111"></div>
<div class="pt" style="left:543.0px;top:1404.4px;font-size:24px;letter-spacing:0.18px;">Fair Market Value</div>
<div class="pr fld" style="left:770.0px;top:1403.0px;width:24.0px;height:24.0px;background:#dfe3fb"></div>
<div class="pr cb" style="left:772.0px;top:1405.5px;width:20.4px;height:20.4px;border:1.8px solid #111"></div>
<div class="pt" style="left:796.4px;top:1404.4px;font-size:24px;">Refinance</div>
<div class="pr cb" style="left:291.0px;top:1455.5px;width:20.4px;height:20.4px;border:1.8px solid #111"></div>
<div class="pt" style="left:315.0px;top:1454.9px;font-size:24px;">Internal Decision</div>
<div class="pr fld" style="left:518.0px;top:1455.0px;width:24.0px;height:23.0px;background:#dfe3fb"></div>
<div class="pr cb" style="left:519.6px;top:1455.5px;width:20.4px;height:20.4px;border:1.8px solid #111"></div>
<div class="pt" style="left:544.0px;top:1454.9px;font-size:24px;">Purchase</div>
<div class="pr fld" style="left:751.0px;top:1454.0px;width:23.0px;height:23.0px;background:#dfe3fb"></div>
<div class="pr cb" style="left:753.0px;top:1455.0px;width:20.4px;height:20.4px;border:1.8px solid #111"></div>
<div class="pt" style="left:776.7px;top:1454.6px;font-size:24px;">Other</div>
<div class="pr fld" style="left:832.0px;top:1443.5px;width:168.0px;height:27.9px;background:#dfe3fb"></div>
<div class="pr " style="left:832.0px;top:1478.0px;width:155.0px;height:1.3px;background:#1a1a1a"></div>
<div class="pt" style="left:180.0px;top:1533.7px;font-size:24px;">Please Check One:</div>
<div class="pr fld" style="left:366.0px;top:1531.0px;width:27.0px;height:6.0px;background:#dfe3fb"></div>
<div class="pr cb" style="left:369.3px;top:1534.3px;width:20.4px;height:20.4px;border:1.8px solid #111"></div>
<div class="pt" style="left:399.7px;top:1533.7px;font-size:24px;">payment due at the time of inspection.</div>
<div class="pr fld" style="left:368.0px;top:1582.0px;width:19.0px;height:4.0px;background:#dfe3fb"></div>
<div class="pr cb" style="left:369.3px;top:1584.5px;width:20.4px;height:20.4px;border:1.8px solid #111"></div>
<div class="pt" style="left:399.0px;top:1583.9px;font-size:24px;">Client has paid Appraisal fee in advance</div>
<div class="pr cb" style="left:133.0px;top:1640.4px;width:28px;height:28px;border:2.4px solid #111;background:#dfe3fb"></div>
<div class="pt" style="left:180.0px;top:1644.3px;font-size:24px;">Note</div>
<div class="pr fld" style="left:250.7px;top:1642.7px;width:748.0px;height:33.3px;background:#dfe3fb"></div>
<div class="pr fld" style="left:248.3px;top:1679.4px;width:750.4px;height:32.9px;background:#dfe3fb"></div>
<div class="pr fld" style="left:244.0px;top:1713.3px;width:753.3px;height:35.2px;background:#dfe3fb"></div>
<div class="pr fld" style="left:246.5px;top:1750.0px;width:749.8px;height:35.2px;background:#dfe3fb"></div>
<div class="pt" style="left:212.7px;width:800px;text-align:center;top:1781.6px;font-size:24px;font-weight:bold;letter-spacing:0.25px;">Thank You for Your Business</div>
<div class="pt" style="left:211.7px;width:800px;text-align:center;top:1836.9px;font-size:24px;font-weight:bold;">Please fax this order form together with an income/expense statement</div>
<div class="pt" style="left:180.0px;top:1910.9px;font-size:24px;">All Appraisal Services, Inc</div>
<div class="pt" style="left:530.0px;top:1910.9px;font-size:24px;color:#1a1aff;">www.aaspj.com</div>
<div class="pr thumbonly" style="left:530px;top:1933px;width:153px;height:2px;background:#1a1aff"></div>
<div class="pt" style="right:182.0px;top:1910.9px;font-size:24px;">(845) 268-8882</div>
</div>
</div>
<div class="abs" style="left:218px;top:106px;width:263px;height:166px;background:rgba(150,110,255,0.06)"></div>
<div class="abs" style="left:217px;top:271.5px;width:264.5px;height:263px;border:2.2px solid #b48cf2"></div>
<div class="t" style="left:343px;top:556px;font-size:22px;color:#333">1</div>


</body></html>
